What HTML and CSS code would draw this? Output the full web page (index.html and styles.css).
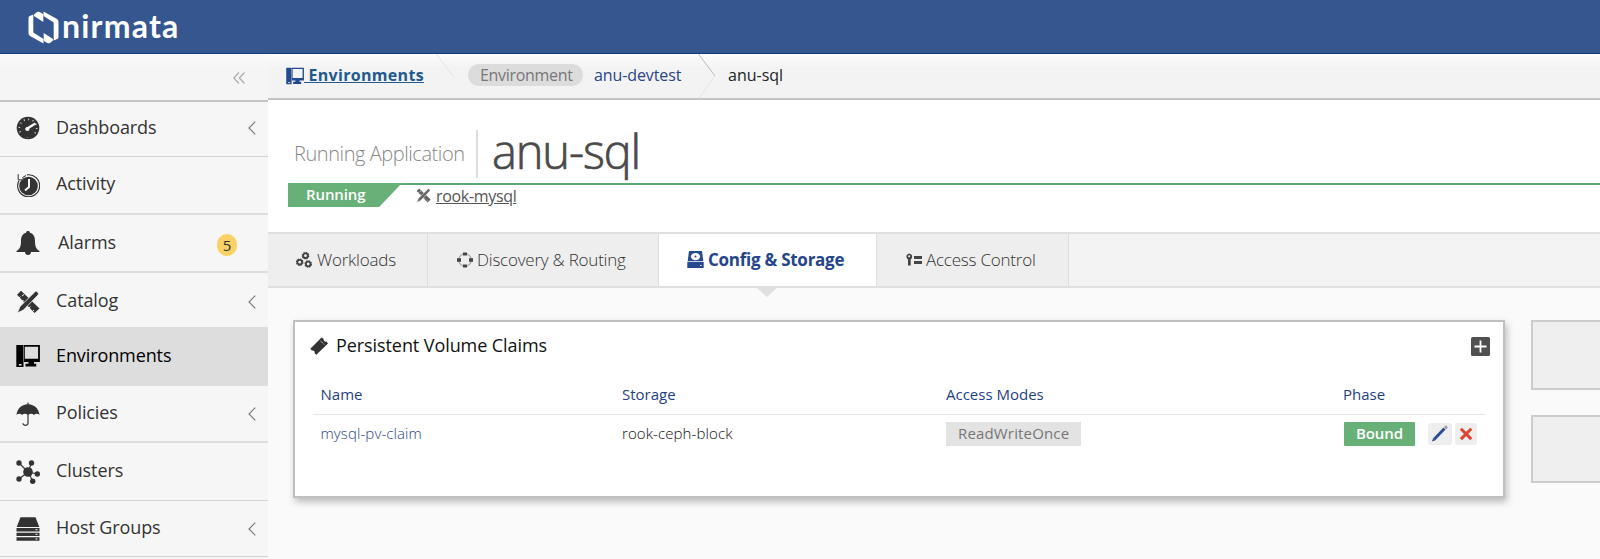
FILE: index.html
```html
<!DOCTYPE html>
<html lang="en">
<head>
<meta charset="utf-8">
<title>Nirmata</title>
<link rel="stylesheet" href="styles.css">
</head>
<body>
<svg class="defs" width="0" height="0">
  <symbol id="i-env" viewBox="0 0 24 24">
    <path d="M.3 1h7.200v22H.3zM8 1h15.900v17H18v1.700h2.200V22.500H9.500v-2.800h3V18H8zM8.800 2.800v11.900h13.300V2.800z" fill-rule="evenodd"/>
    <path d="M3 20h2.500v1.500H3z" class="hole"/>
  </symbol>
  <symbol id="i-tools" viewBox="0 0 24 24">
    <path d="M5 .8 1 4.800 18.500 23l5-4.500z"/>
    <path d="M2.500 8.500l2-1.800M6 11.500l1.500-1.500M12.500 18.500l2-2M16 22l2-2M8 4.500 6 6" class="cut thin"/>
    <path d="M19.200 1.600c1-1.200 4.300 1.400 3 3.200L7.500 20 1.300 23 4 16.500z" class="edge"/>
  </symbol>
  <symbol id="i-chev" viewBox="0 0 8 14"><path d="M7.300.7 1 7l6.300 6.300" fill="none" stroke="currentColor" stroke-width="1.100"/></symbol>
</svg>

<header class="topbar">
  <svg class="mark" viewBox="0 0 31 33">
    <path d="M.5 7Q.5 5.700 1.700 5L5.300 3.500V21.500L15.500 28V32.500L2 25Q.5 24 .5 22z"/>
    <path d="M6 3.500 9 1Q11 .3 13 1.700L15.300 3.300V11L6 5z"/>
    <path d="M30.500 26Q30.500 27.300 29.300 28L25.700 29.500V11.500L15.500 5V.5L29 8Q30.500 9 30.500 11z"/>
    <path d="M25 29.500 22 32Q20 32.700 18 31.300L15.700 29.700V22L25 28z"/>
  </svg>
  <span class="word">nirmata</span>
</header>

<div class="shell">
  <nav class="side">
    <div class="collapse"><svg viewBox="0 0 12 12"><path d="M6 .5.800 6 6 11.500M11.500.5 6.300 6l5.200 5.500"/></svg></div>
    <a class="item i1"><svg class="ico" viewBox="0 0 24 24"><circle cx="12" cy="12" r="11.300"/><circle cx="12" cy="12" r="8.700" class="ticks"/><path d="M6 18h12v3H6z"/><path d="m10.500 13 8-5" class="cut fat"/><circle cx="11.500" cy="13" r="2" class="white"/></svg><span class="t">Dashboards</span><svg class="chev"><use href="#i-chev"/></svg></a>
    <a class="item i2"><svg class="ico" viewBox="0 0 24 24"><circle cx="12.500" cy="13" r="9.300"/><path d="M3 7.500A11 11 0 1 0 11 1.900" class="line"/><path d="M2.200 1.200v5.600h6L6.500 4.500l3.500-2" class="line light"/><path d="M13 6v8l-4 3.500" class="cut"/></svg><span class="t">Activity</span></a>
    <a class="item i3"><svg class="ico" viewBox="0 0 24 24"><path d="M12 0c1.300 0 1.800.7 1.900 1.700C18 3 19 6 19 10c0 6 1.300 8 4.500 10v1H15c0 1.800-1.300 3-3 3s-3-1.200-3-3H.5v-1C3.700 18 5 16 5 10c0-4 1-7 5.100-8.300C10.200.7 10.700 0 12 0z"/></svg><span class="t alarm">Alarms</span><b class="badge">5</b></a>
    <a class="item i4"><svg class="ico"><use href="#i-tools"/></svg><span class="t">Catalog</span><svg class="chev"><use href="#i-chev"/></svg></a>
    <a class="item i5 active"><svg class="ico"><use href="#i-env"/></svg><span class="t">Environments</span></a>
    <a class="item i6"><svg class="ico" viewBox="0 0 24 24"><path d="M.5 13C1 6.500 6 2.500 11.400 2.200V.5h1.200v1.700C18 2.500 23 6.500 23.500 13c-1.600-1.800-4-1.800-5.500 0-1.600-1.800-4-1.800-6 0-2-1.800-4.400-1.800-6 0-1.500-1.800-3.900-1.800-5.500 0z"/><path d="M12 12v9c0 3-5 3-5 .2" class="line"/></svg><span class="t">Policies</span><svg class="chev"><use href="#i-chev"/></svg></a>
    <a class="item i7"><svg class="ico" viewBox="0 0 24 24"><path d="M12 12 3 3M12 12l3.500-9M12 12l9.500 2M12 12l-9 7M12 12l5 9.500" class="line"/><circle cx="12" cy="12" r="4.800"/><circle cx="3" cy="3" r="2.700"/><circle cx="15.500" cy="3" r="2.700"/><circle cx="21.300" cy="14" r="2.700"/><circle cx="3" cy="19" r="2.700"/><circle cx="16.700" cy="21.300" r="2.700"/></svg><span class="t">Clusters</span></a>
    <a class="item i8"><svg class="ico" viewBox="0 0 24 24"><path d="M4.500.3h15L23.300 10H.7zM.5 11h23v3.500H.5zM.5 15.700h23v3.300H.5zM.5 20.300h23v3.500H.5z"/><path d="M19.500 12.700h2M19.500 17.300h2M19.500 22h2" class="cut thin"/></svg><span class="t">Host Groups</span><svg class="chev"><use href="#i-chev"/></svg></a>
  </nav>

  <main class="main">
    <div class="crumbs">
      <a class="crumb-home"><svg class="ci"><use href="#i-env"/></svg><span>&nbsp;Environments</span></a>
      <svg class="sep" viewBox="0 0 18 45"><path d="M.5 0 17 22"/></svg>
      <span class="pill">Environment</span>
      <a class="crumb-link">anu-devtest</a>
      <svg class="sep" viewBox="0 0 18 45"><path d="M.5 0 17 22" class="strong"/><path d="M17 22 .5 45"/></svg>
      <span class="crumb-now">anu-sql</span>
    </div>

    <section class="hero">
      <div class="heading"><span class="kind">Running Application</span><h1>anu-sql</h1></div>
      <div class="status">
        <span class="ribbon">Running</span>
        <svg class="ti"><use href="#i-tools"/></svg><a class="app">rook-mysql</a>
      </div>
    </section>

    <div class="tabs">
      <a class="tab w1"><svg class="tic" viewBox="0 0 16 16"><g class="gear"><circle cx="9.500" cy="3.700" r="2.300"/><circle cx="3.700" cy="10.200" r="2.300"/><circle cx="12.200" cy="12" r="2.300"/></g><g class="teeth"><circle cx="9.500" cy="3.700" r="3.200"/><circle cx="3.700" cy="10.200" r="3.200"/><circle cx="12.200" cy="12" r="3.200"/></g></svg><span>Workloads</span></a>
      <a class="tab w2"><svg class="tic" viewBox="0 0 16 16"><circle cx="8" cy="8" r="6.300" class="ring"/><path d="M6 .5h4v3H6zM6 12.500h4v3H6zM0 6.300h4v3.500H0zM12 6.300h4v3.500h-4z"/></svg><span>Discovery &amp; Routing</span></a>
      <a class="tab w3 on"><svg class="tic big" viewBox="0 0 17 17"><path d="M2 0h13l1.300 10.300H.7zM.3 11h16.400v6H.3z"/><ellipse cx="8.500" cy="5.600" rx="4.600" ry="3.600" class="white"/><circle cx="8.500" cy="5.600" r="1"/><path d="M13 14.500h1.500" class="cut thin"/></svg><span>Config &amp; Storage</span></a>
      <a class="tab w4"><svg class="tic" viewBox="0 0 16 16"><path d="M3.200 1.500a3.200 3.200 0 0 1 1.500 5.900V13.500H2V7.400A3.200 3.200 0 0 1 3.200 1.500zM8 4h8v3H8zM8 9h8v3H8z"/><circle cx="3.200" cy="4.200" r="1" class="white"/></svg><span>Access Control</span></a>
    </div>

    <div class="body">
      <section class="panel">
        <div class="panel-head">
          <svg class="ticket" viewBox="0 0 18 18"><path d="M.3 11.700 11.500.5l2 1.300c0 2 1.200 3.300 3 2.800L18 6.600 6.300 17.800l-1.600-1.300c.4-2-1-3.300-2.800-2.900z"/><path d="m10.500 3.800 3.700 3.800" class="cut dash"/></svg>
          <h2>Persistent Volume Claims</h2>
          <button class="add"><svg viewBox="0 0 19 19"><path d="M9.500 3.500v12M3.500 9.500h12"/></svg></button>
        </div>
        <div class="row th"><span>Name</span><span>Storage</span><span>Access Modes</span><span>Phase</span></div>
        <div class="row td">
          <span class="link">mysql-pv-claim</span><span>rook-ceph-block</span>
          <span><b class="mode">ReadWriteOnce</b></span>
          <span><b class="bound">Bound</b>
            <b class="act"><svg viewBox="0 0 24 22"><path d="m6 16.500 10.500-11" class="pen"/><path d="m17 5 2-1.500" class="tip"/><path d="m4 18.500 1-3 2 2z"/></svg></b><b class="act del"><svg viewBox="0 0 22 22"><path d="m5.900 5.700 10.400 10.400M16.300 5.700 5.900 16.100"/></svg></b></span>
        </div>
      </section>
      <div class="cards"><div class="card"></div><div class="card second"></div></div>
    </div>
  </main>
</div>
</body>
</html>
```
FILE: styles.css
```css
* { box-sizing: border-box; }
body { margin: 0; width: 1600px; height: 559px; overflow: hidden; font-family: "Open Sans", "Noto Sans", sans-serif; background: #fafafa; color: #333; }
svg { display: block; fill: currentColor; flex: none; }
.defs { position: absolute; }
span, a, b { white-space: nowrap; }
.white { fill: #fff; }
.cut { fill: none; stroke: #f6f6f6; stroke-width: 2; }
.fat { stroke-width: 2.4; stroke-linecap: round; }
.thin { stroke-width: 1; }
.line { fill: none; stroke: currentColor; stroke-width: 1.2; }
.light { fill: #f6f6f6; stroke-width: 1; }
.hole { fill: #ddd; }
.edge { stroke: #f6f6f6; stroke-width: .8; }
.ticks { fill: none; stroke: #ccc; stroke-width: 1.8; stroke-dasharray: 1 3.55; }

.topbar { height: 54px; background: #36568f; border-bottom: 1px solid #0d3b7c; display: flex; color: #fff; padding-left: 28px; }
.mark { width: 31px; height: 33px; margin-top: 11px; }
.word { font-family: "Lato", sans-serif; font-weight: 700; font-size: 32px; line-height: 40px; margin: 6px 0 0 3px; letter-spacing: 1.2px; }

.shell { display: flex; height: 505px; }
.side { width: 268px; background: #f5f5f5; flex: none; }
.collapse { height: 48px; border-bottom: 2px solid #c4c4c8; display: flex; justify-content: flex-end; padding: 18px 23px 0 0; background: linear-gradient(#fafafa, #f5f5f5 14px); }
.collapse svg { width: 12px; height: 12px; fill: none; stroke: #aaa; stroke-width: 1.2; }
.item { border-bottom: 1px solid #d4d4d4; display: flex; align-items: center; padding: 0 12px 3px 16px; font-size: 18px; line-height: 26px; color: #333; background: #f6f6f6; letter-spacing: -.1px; }
.i1 { height: 55px; padding-bottom: 5px; }
.i2 { height: 58px; padding-bottom: 4px; border-bottom-width: 2px; border-color: #ddd; }
.i3 { height: 58px; padding-bottom: 3px; border-bottom-width: 2px; border-color: #ddd; }
.i4 { height: 54px; padding-bottom: 0; border-bottom: 0; }
.i5 { height: 59px; }
.i6 { height: 57px; border-bottom-width: 2px; border-color: #ddd; }
.i7 { height: 58px; }
.i8 { height: 56px; }
.item.active { background: #ddd; color: #000; border-color: #ddd; }
.ico { width: 24px; height: 24px; margin: 3px 16px 0 0; }
.item .chev { width: 8px; height: 14px; margin-left: auto; margin-top: 3px; color: #777; }
.alarm { margin-left: 2px; }
.badge { width: 20px; height: 22px; border-radius: 10px; background: #f9d165; font-weight: 400; font-size: 15px; line-height: 22px; text-align: center; margin: 6px 19px 0 auto; }

.main { width: 1332px; display: flex; flex-direction: column; }
.crumbs { height: 46px; background: linear-gradient(#fcfcfc, #f3f3f3 14px); border-bottom: 2px solid #c4c4c8; display: flex; font-size: 16px; line-height: 24px; }
.crumbs > * { flex: none; }
.crumb-home { display: flex; margin: 9px 0 0 18px; width: 145px; font-weight: 700; color: #215a8f; text-decoration: underline; letter-spacing: .31px; }
.ci { width: 18px; height: 18px; margin-top: 4px; color: #24498f; }
.crumbs .hole { fill: #fff; }
.sep { width: 18px; height: 45px; fill: none; stroke: #e2e2e2; stroke-width: 1; margin-left: 5px; }
.strong { stroke: #bbb; }
.pill { width: 115px; height: 22px; border-radius: 11px; background: #dcdcdc; color: #777; font-size: 16px; letter-spacing: -.3px; line-height: 22px; margin: 10px 0 0 14px; padding-left: 12px; }
.crumb-link { width: 99px; margin: 9px 0 0 11px; color: #2b4585; letter-spacing: -.1px; }
.crumb-now { margin: 9px 0 0 12px; color: #222; }

.hero { height: 132px; background: #fff; padding: 30px 0 0 20px; }
.heading { display: flex; height: 55px; border-bottom: 2px solid #5aa873; }
.kind { width: 190px; height: 48px; border-right: 2px solid #ddd; font-weight: 300; font-size: 20px; letter-spacing: -.44px; line-height: 28px; color: #888; padding: 10px 0 0 6px; }
h1 { margin: -11px 0 0 14px; font-size: 47px; line-height: 64px; font-weight: 300; color: #4a4a4a; letter-spacing: -1.15px; -webkit-text-stroke: .7px #4a4a4a; }
.status { display: flex; height: 24px; font-size: 16px; line-height: 24px; margin-top: -2px; }
.ribbon { width: 114px; height: 24px; background: #67b078; color: #fff; font-weight: 600; font-size: 15px; letter-spacing: -.1px; line-height: 23px; padding-left: 18px; clip-path: polygon(0 0, 100% 0, 80% 100%, 0 100%); }
.ti { width: 15px; height: 15px; margin: 5px 4px 0 14px; color: #666; }
.app { color: #555; text-decoration: underline; line-height: 26px; letter-spacing: -.32px; margin-left: 1px; }

.tabs { height: 56px; display: flex; background: #f3f3f3; border-top: 2px solid #e0e0e0; border-bottom: 2px solid #e0e0e0; font-size: 17px; line-height: 24px; font-weight: 300; color: #333; letter-spacing: -.22px; }
.tab { height: 52px; background: #eee; border-right: 1.5px solid #ddd; display: flex; padding: 14px 0 0 28px; position: relative; }
.w1 { width: 160px; } .w2 { width: 231px; } .w3 { width: 218px; } .w4 { width: 192px; }
.on { background: #fff; color: #24458a; font-weight: 700; letter-spacing: -.26px; }
.on::after { content: ""; position: absolute; left: 96px; top: 52px; border: 12.500px solid transparent; border-top: 11px solid #e0e0e0; border-bottom: 0; }
.tic { width: 16px; height: 16px; margin: 4px 4px 0 1px; color: #444; }
.w1 .tic { margin-left: 0; margin-right: 5px; }
.big { width: 17px; height: 17px; color: #24498f; margin: 3px 4px 0 0; }
.gear circle { fill: none; stroke: #444; stroke-width: 1.8; }
.teeth circle { fill: none; stroke: #444; stroke-width: 1.2; stroke-dasharray: 1.5 1; }
.ring { fill: none; stroke: #888; stroke-width: 1; }

.body { display: flex; padding: 32px 0 0 25px; }
.panel { width: 1212px; height: 178px; background: #fff; border: 2px solid #c0c0c0; box-shadow: 2px 4px 7px rgba(0,0,0,.25); flex: none; }
.panel-head { display: flex; height: 50px; color: #333; }
.ticket { width: 18px; height: 18px; margin: 15px 0 0 15px; }
.dash { stroke-width: 1; stroke-dasharray: 1 1; }
h2 { margin: 10px 0 0 8px; font-size: 18px; line-height: 26px; font-weight: 400; color: #111; letter-spacing: -.08px; }
.add { margin: 15px 13px 0 auto; width: 19px; height: 19px; padding: 0; border: 0; border-radius: 1.5px; background: #505050; }
.add svg { stroke: #fff; stroke-width: 1.8; }
.row { display: grid; grid-template-columns: 301.500px 324px 397px 1fr; margin: 0 18px; padding-left: 7.500px; font-size: 15px; line-height: 24px; }
.th { color: #1f3f7f; height: 43px; padding-top: 10px; border-bottom: 1.5px solid #e6e6e6; }
.td { font-weight: 300; color: #111; padding-top: 7px; letter-spacing: .1px; }
.td > span { height: 24px; display: flex; line-height: 22px; }
.td .link { color: #2b4585; }
.mode, .bound { height: 24px; font-weight: 400; padding: 0 0 0 12px; background: #e3e3e3; color: #777; width: 135px; line-height: 23px; }
.mode { letter-spacing: .16px; }
.bound { width: 71px; margin-left: 1px; background: #67b078; color: #fff; font-weight: 600; border-radius: 1px; letter-spacing: -.1px; }
.act { width: 24px; height: 22px; background: #eee; border-radius: 3px; margin: 1px 0 0 13px; color: #24498f; }
.del { width: 22px; margin-left: 3px; }
.pen { stroke: #2b4f94; stroke-width: 3; fill: none; }
.tip { stroke: #99a; stroke-width: 3; }
.del svg { stroke: #d9482f; stroke-width: 3; }
.cards { margin-left: 25.500px; width: 90px; flex: none; }
.card { border: 2px solid #ccc; background: #efefef; height: 70px; }
.second { margin-top: 25px; height: 68px; }
```
